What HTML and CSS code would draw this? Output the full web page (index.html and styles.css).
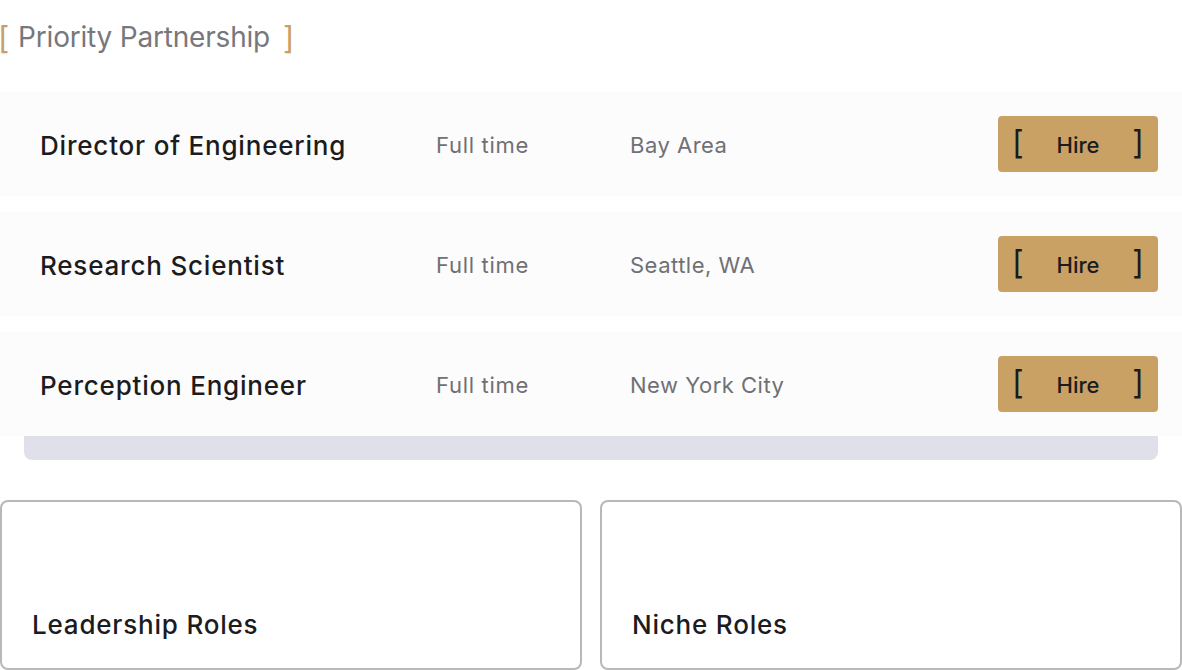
FILE: index.html
```html
<!DOCTYPE html>
<html lang="en">
<head>
    <meta charset="UTF-8">
    <meta name="viewport" content="width=device-width, initial-scale=1.0">
    <title>Priority Partnership</title>
    <link rel="stylesheet" href="styles.css">
</head>
<body>
    <h2 class="section-title"><span class="bracket">[</span>Priority Partnership<span class="bracket">]</span></h2>

    <div class="roles">
        <div class="role-row">
            <div class="role-name">Director of Engineering</div>
            <div class="role-type">Full time</div>
            <div class="role-place">Bay Area</div>
            <button class="hire-btn"><span>[</span>Hire<span>]</span></button>
        </div>
        <div class="role-row">
            <div class="role-name">Research Scientist</div>
            <div class="role-type">Full time</div>
            <div class="role-place">Seattle, WA</div>
            <button class="hire-btn"><span>[</span>Hire<span>]</span></button>
        </div>
        <div class="role-row">
            <div class="role-name">Perception Engineer</div>
            <div class="role-type">Full time</div>
            <div class="role-place">New York City</div>
            <button class="hire-btn"><span>[</span>Hire<span>]</span></button>
        </div>
        <div class="roles-footer"></div>
    </div>

    <div class="cards">
        <div class="card">Leadership Roles</div>
        <div class="card">Niche Roles</div>
    </div>
</body>
</html>
```

FILE: styles.css
```css
body {
    margin: 0;
    font-family: Inter, "Noto Sans", sans-serif;
    background: #ffffff;
    color: #1b1b20;
}
.section-title {
    margin: 0;
    height: 72px;
    display: flex;
    align-items: center;
    font-size: 28px;
    font-weight: 400;
    color: #77777c;
    letter-spacing: -0.2px;
    padding-top: 2px;
    box-sizing: border-box;
}
.section-title .bracket {
    color: #c9a063;
    font-weight: 400;
    font-size: 31px;
}
.section-title .bracket:first-child {
    margin-left: -2px;
    margin-right: 9px;
}
.section-title .bracket:last-child {
    margin-left: 13px;
}
.roles {
    margin-top: 20px;
    display: flex;
    flex-direction: column;
    gap: 16px;
}
.role-row {
    height: 104px;
    background: #fcfcfc;
    display: flex;
    align-items: center;
    padding: 2px 24px 0 40px;
    box-sizing: border-box;
}
.role-name {
    width: 396px;
    font-size: 26px;
    font-weight: 500;
    letter-spacing: 0.8px;
}
.role-type {
    width: 194px;
    font-size: 22px;
    color: #707075;
    letter-spacing: 0.7px;
}
.role-place {
    flex: 1;
    font-size: 22px;
    color: #707075;
    letter-spacing: 0.5px;
}
.hire-btn {
    width: 160px;
    height: 56px;
    margin-top: -2px;
    background: #c9a165;
    border: none;
    border-radius: 4px;
    display: flex;
    align-items: center;
    justify-content: space-between;
    padding: 2px 14px 0;
    font-family: inherit;
    font-size: 22px;
    font-weight: 500;
    color: #1b1b20;
    cursor: pointer;
}
.hire-btn span {
    font-size: 32px;
    font-weight: 400;
    line-height: 1;
    padding-bottom: 4px;
}
.roles-footer {
    height: 24px;
    margin: -16px 24px 0;
    background: #e0e0ea;
    border-radius: 0 0 8px 8px;
}
.cards {
    margin-top: 40px;
    display: grid;
    grid-template-columns: 1fr 1fr;
    gap: 18px;
}
.card {
    height: 170px;
    border: 2px solid #b8b8bb;
    border-radius: 8px;
    box-sizing: border-box;
    display: flex;
    align-items: flex-end;
    padding: 0 30px 28px;
    font-size: 26px;
    font-weight: 500;
    letter-spacing: 0.8px;
}
```
